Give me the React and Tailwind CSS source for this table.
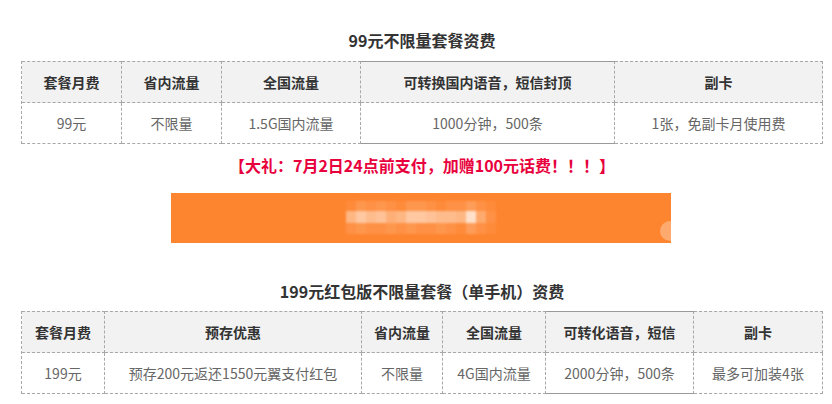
const font = { fontFamily: '"Microsoft YaHei", "Noto Sans CJK SC", "Noto Sans", sans-serif' };

const plan1 = {
  cols: 'grid-cols-[100px_100px_139px_254px_208px]',
  head: ['套餐月费', '省内流量', '全国流量', '可转换国内语音，短信封顶', '副卡'],
  body: ['99元', '不限量', '1.5G国内流量', '1000分钟，500条', '1张，免副卡月使用费'],
  solid: 3,
};

const plan2 = {
  cols: 'grid-cols-[83px_257px_81px_103px_148px_129px]',
  head: ['套餐月费', '预存优惠', '省内流量', '全国流量', '可转化语音，短信', '副卡'],
  body: ['199元', '预存200元返还1550元翼支付红包', '不限量', '4G国内流量', '2000分钟，500条', '最多可加装4张'],
  solid: 4,
};

const PriceTable = ({ plan }) => (
  <div className={`grid ${plan.cols} w-[802px] border-l border-dashed border-[#a8a8a8]`}>
    {plan.head.map((h, i) => (
      <div
        key={h}
        className={`h-[42px] flex items-center justify-center bg-[#f2f2f2] border-t border-r border-b border-dashed border-[#a8a8a8] text-[14px] font-bold text-[#333] leading-[20px] ${
          i === plan.solid ? '[border-top-style:solid] [border-top-color:#999]' : ''
        }`}
      >
        {h}
      </div>
    ))}
    {plan.body.map((b, i) => (
      <div
        key={b}
        className={`h-[41px] flex items-center justify-center border-r border-b border-dashed border-[#a8a8a8] text-[14px] text-[#666] leading-[20px] ${
          i === plan.solid ? '[border-bottom-style:solid] [border-bottom-color:#999]' : ''
        }`}
      >
        {b}
      </div>
    ))}
  </div>
);

const mosaic = [
  ['bg-white/5', 'bg-white/15', 'bg-white/10', 'bg-white/15', 'bg-white/10', 'bg-white/5', 'bg-white/15', 'bg-white/15', 'bg-white/10', 'bg-white/5', 'bg-white/10', 'bg-white/10', 'bg-white/20', 'bg-white/10', 'bg-white/5'],
  ['bg-white/40', 'bg-white/55', 'bg-white/45', 'bg-white/50', 'bg-white/35', 'bg-white/40', 'bg-white/55', 'bg-white/55', 'bg-white/50', 'bg-white/45', 'bg-white/45', 'bg-white/40', 'bg-white/75', 'bg-white/30', 'bg-white/10'],
  ['bg-white/10', 'bg-white/15', 'bg-white/10', 'bg-white/10', 'bg-white/15', 'bg-white/10', 'bg-white/15', 'bg-white/10', 'bg-white/10', 'bg-white/15', 'bg-white/10', 'bg-white/5', 'bg-white/20', 'bg-white/10', 'bg-white/5'],
];

export default function App() {
  return (
    <div className="w-[832px] h-[404px] bg-white overflow-hidden" style={font}>
      <div className="ml-[21px] w-[802px] flex flex-col">
        <div className="h-[61px] pt-[29px] text-center text-[16px] font-bold leading-[23px] text-[#333]">
          99元不限量套餐资费
        </div>

        <PriceTable plan={plan1} />

        <div className="h-[49px] pt-[10px] text-center text-[16px] font-bold leading-[22px] text-[#e8003d]">
          【大礼：7月2日24点前支付，加赠100元话费！！！】
        </div>

        <div className="ml-[150px] w-[500px] h-[50px] bg-[#fe8530] relative overflow-hidden flex items-center justify-center">
          <div className="flex flex-col blur-[1px] -mt-[2px]">
            <div className="flex h-[10px]">
              {mosaic[0].map((c, i) => (
                <div key={i} className={`w-[10px] ${c}`} />
              ))}
            </div>
            <div className="flex h-[12px]">
              {mosaic[1].map((c, i) => (
                <div key={i} className={`w-[10px] ${c}`} />
              ))}
            </div>
            <div className="flex h-[11px]">
              {mosaic[2].map((c, i) => (
                <div key={i} className={`w-[10px] ${c}`} />
              ))}
            </div>
          </div>
          <div className="absolute left-[489px] top-[28px] w-[20px] h-[20px] rounded-full bg-white/30" />
        </div>

        <div className="h-[68px] pt-[37px] text-center text-[16px] font-bold leading-[23px] text-[#333]">
          199元红包版不限量套餐（单手机）资费
        </div>

        <PriceTable plan={plan2} />
      </div>
    </div>
  );
}
